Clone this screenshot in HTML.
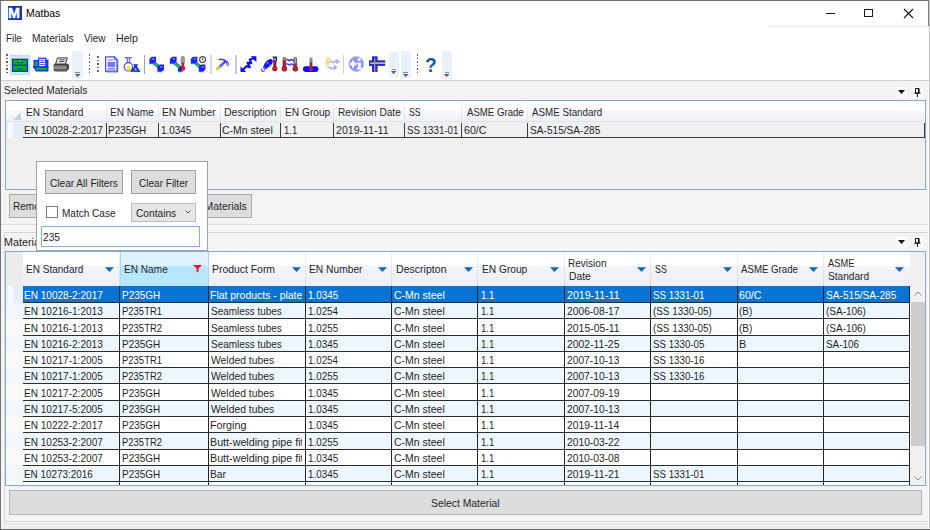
<!DOCTYPE html>
<html lang="en"><head><meta charset="utf-8"><title>Matbas</title>
<style>
html,body{margin:0;padding:0;background:#fff;}
body{width:930px;height:530px;position:relative;overflow:hidden;font-family:"Liberation Sans",sans-serif;}
#w{position:absolute;left:0;top:0;width:930px;height:530px;overflow:hidden;}
#w div,#w span,#w svg{position:absolute;}
.t{white-space:nowrap;line-height:1;transform-origin:0 0;display:block;}
</style></head><body><div id="w">
<div style="left:0px;top:0px;width:930px;height:530px;background:#ffffff;"></div>
<div style="left:8px;top:6px;width:13.5px;height:13.6px;background:#0b3aa8;"></div>
<span class="t" style="left:8.1px;top:4.5px;font-size:15.4px;line-height:16px;font-weight:bold;color:#fff;-webkit-text-stroke:0.45px #fff;transform:scaleX(0.93);">M</span>
<span class="t" style="left:25.643672692673643px;top:7.81px;font-size:10.5px;color:#000;transform:scaleX(0.9942);">Matbas</span>
<div style="left:825.5px;top:12.6px;width:9px;height:1px;background:#1a1a1a;"></div>
<div style="left:864px;top:8.5px;width:9px;height:8.5px;border:1px solid #1a1a1a;box-sizing:border-box;"></div>
<svg style="left:903px;top:7.5px" width="11" height="11" viewBox="0 0 11 11"><path d="M1 1 L10 10 M10 1 L1 10" stroke="#1a1a1a" stroke-width="1.15" fill="none"/></svg>
<div style="left:768px;top:26px;width:161px;height:1px;background:#ececec;"></div>
<span class="t" style="left:5.893465651264649px;top:33.06px;font-size:10.8px;color:#262626;transform:scaleX(0.9104);">File</span>
<span class="t" style="left:31.656492675718294px;top:33.06px;font-size:10.8px;color:#262626;transform:scaleX(0.9521);">Materials</span>
<span class="t" style="left:83.95600512932445px;top:33.06px;font-size:10.8px;color:#262626;transform:scaleX(0.9270);">View</span>
<span class="t" style="left:115.62989874082908px;top:33.06px;font-size:10.8px;color:#262626;transform:scaleX(0.9821);">Help</span>
<div style="left:6.2px;top:54.0px;width:1.6px;height:1.6px;background:#666666;"></div>
<div style="left:6.2px;top:57.52px;width:1.6px;height:1.6px;background:#666666;"></div>
<div style="left:6.2px;top:61.04px;width:1.6px;height:1.6px;background:#666666;"></div>
<div style="left:6.2px;top:64.56px;width:1.6px;height:1.6px;background:#666666;"></div>
<div style="left:6.2px;top:68.08px;width:1.6px;height:1.6px;background:#666666;"></div>
<div style="left:6.2px;top:71.60000000000001px;width:1.6px;height:1.6px;background:#666666;"></div>
<div style="left:88.9px;top:54.0px;width:1.6px;height:1.6px;background:#666666;"></div>
<div style="left:88.9px;top:57.52px;width:1.6px;height:1.6px;background:#666666;"></div>
<div style="left:88.9px;top:61.04px;width:1.6px;height:1.6px;background:#666666;"></div>
<div style="left:88.9px;top:64.56px;width:1.6px;height:1.6px;background:#666666;"></div>
<div style="left:88.9px;top:68.08px;width:1.6px;height:1.6px;background:#666666;"></div>
<div style="left:88.9px;top:71.60000000000001px;width:1.6px;height:1.6px;background:#666666;"></div>
<div style="left:97.4px;top:56.2px;width:1.6px;height:1.6px;background:#666666;"></div>
<div style="left:97.4px;top:59.720000000000006px;width:1.6px;height:1.6px;background:#666666;"></div>
<div style="left:97.4px;top:63.24000000000001px;width:1.6px;height:1.6px;background:#666666;"></div>
<div style="left:97.4px;top:66.76px;width:1.6px;height:1.6px;background:#666666;"></div>
<div style="left:97.4px;top:70.28px;width:1.6px;height:1.6px;background:#666666;"></div>
<div style="left:416.9px;top:54.0px;width:1.6px;height:1.6px;background:#666666;"></div>
<div style="left:416.9px;top:57.52px;width:1.6px;height:1.6px;background:#666666;"></div>
<div style="left:416.9px;top:61.04px;width:1.6px;height:1.6px;background:#666666;"></div>
<div style="left:416.9px;top:64.56px;width:1.6px;height:1.6px;background:#666666;"></div>
<div style="left:416.9px;top:68.08px;width:1.6px;height:1.6px;background:#666666;"></div>
<div style="left:416.9px;top:71.60000000000001px;width:1.6px;height:1.6px;background:#666666;"></div>
<div style="left:72.4px;top:51px;width:10.2px;height:28px;background:#eaf1fb;border-radius:0 2px 2px 0;"></div>
<div style="left:75.3px;top:72px;width:4.4px;height:1px;background:#8a8a8a;"></div>
<svg style="left:74.9px;top:74px" width="5.2" height="3" viewBox="0 0 5.2 3"><path d="M0 0 H5.2 L2.6 3 Z" fill="#5a5a5a"/></svg>
<div style="left:388.5px;top:52px;width:10.5px;height:24.5px;background:#eaf1fb;border-radius:0 2px 2px 0;"></div>
<div style="left:391.55px;top:69px;width:4.4px;height:1px;background:#8a8a8a;"></div>
<svg style="left:391.15px;top:71px" width="5.2" height="3" viewBox="0 0 5.2 3"><path d="M0 0 H5.2 L2.6 3 Z" fill="#5a5a5a"/></svg>
<div style="left:400.5px;top:51px;width:10.2px;height:28px;background:#eaf1fb;border-radius:0 2px 2px 0;"></div>
<div style="left:403.40000000000003px;top:72px;width:4.4px;height:1px;background:#8a8a8a;"></div>
<svg style="left:403.0px;top:74px" width="5.2" height="3" viewBox="0 0 5.2 3"><path d="M0 0 H5.2 L2.6 3 Z" fill="#5a5a5a"/></svg>
<div style="left:441.7px;top:51px;width:10.2px;height:28px;background:#eaf1fb;border-radius:0 2px 2px 0;"></div>
<div style="left:444.6px;top:72px;width:4.4px;height:1px;background:#8a8a8a;"></div>
<svg style="left:444.2px;top:74px" width="5.2" height="3" viewBox="0 0 5.2 3"><path d="M0 0 H5.2 L2.6 3 Z" fill="#5a5a5a"/></svg>
<div style="left:143.9px;top:55px;width:1.2px;height:18.5px;background:#9aa5b5;"></div>
<div style="left:210.4px;top:55px;width:1.4px;height:18.5px;background:#d3d8e1;"></div>
<div style="left:235.4px;top:55px;width:1.6px;height:18.5px;background:#c3cad6;"></div>
<div style="left:342.9px;top:55px;width:1.3px;height:18.5px;background:#cdd3dd;"></div>
<div style="left:10px;top:55px;width:19.5px;height:19.5px;background:#cfe9fa;border:1px dotted #a4d4f2;box-sizing:border-box;"></div>
<svg style="left:0;top:50px" width="460" height="30" viewBox="0 50 460 30">
<!-- cabinet -->
<rect x="12.5" y="59.3" width="15" height="12" fill="#00b400" stroke="#1a1aff" stroke-width="1.2"/>
<rect x="12.5" y="64.6" width="15" height="1.3" fill="#1432c8"/>
<rect x="17.4" y="61.7" width="5.2" height="1.2" fill="#1a3cd0"/>
<rect x="17.4" y="68.2" width="5.2" height="1.2" fill="#1a3cd0"/>
<rect x="18.8" y="60.9" width="2.4" height="0.8" fill="#7fd6c0"/>
<!-- tray with paper -->
<path d="M33.6 66.6 H47.8 V70.8 H36.2 Z" fill="#00b400" stroke="#1a1aff" stroke-width="1.2" stroke-linejoin="round"/>
<rect x="34" y="60.4" width="4.6" height="6.2" fill="#14967a" stroke="#1a1aff" stroke-width="1"/>
<rect x="45.2" y="60" width="2.8" height="7" fill="#0a6c8c" stroke="#1a1aff" stroke-width="0.8"/>
<rect x="38.8" y="58.2" width="7" height="8.5" fill="#ffffff" stroke="#1a1aff" stroke-width="1.1"/>
<path d="M40.2 60.3 H44.6 M40.2 62.4 H44.6 M40.2 64.5 H44.6" stroke="#4a4aff" stroke-width="1.1"/>
<!-- printer -->
<path d="M53.6 65 Q53.6 63.4 55.4 63.4 H66.6 Q69 63.4 69 65.6 V68.4 L66.4 71.5 H55.6 Q53.6 71.5 53.6 69.6 Z" fill="#454545"/>
<path d="M57.6 57.9 H67.4 L65.2 64 H55.6 Z" fill="#f0f0f0" stroke="#333333" stroke-width="1"/>
<path d="M59.4 59.8 H65 M58.8 61.6 H64.2" stroke="#4a4a4a" stroke-width="1"/>
<rect x="54.4" y="65.6" width="12" height="1" fill="#a8a8a8"/>
<rect x="54.2" y="67.4" width="12.4" height="1.1" fill="#d0d0d0"/>
<rect x="55" y="69.6" width="11" height="0.8" fill="#8a8a8a"/>
<!-- document -->
<path d="M106.6 72 H117.7 V59.8" fill="none" stroke="#5aa05a" stroke-width="1.2"/>
<path d="M105.6 56.8 H114.6 L117 59.4 V71.2 H105.6 Z" fill="#ffffff" stroke="#4646ff" stroke-width="1.2" stroke-linejoin="round"/>
<path d="M114.4 56.8 V59.6 H117" fill="none" stroke="#4646ff" stroke-width="0.9"/>
<rect x="107.6" y="59.4" width="5.8" height="1" fill="#7070ff"/>
<rect x="107.6" y="61.8" width="7.6" height="5.4" fill="#7878ff"/>
<rect x="107.6" y="68.4" width="7.6" height="1.1" fill="#4646ff"/>
<!-- flasks -->
<rect x="125" y="57.2" width="6.8" height="1.3" fill="#4c4cff"/>
<path d="M127.3 58.4 V62.6 M129.6 58.4 V62.6" stroke="#4c4cff" stroke-width="1"/>
<circle cx="128.4" cy="66.8" r="4.2" fill="#ffffff" stroke="#4444ff" stroke-width="1.2"/>
<path d="M126.8 65.8 H130.4 V70.6 H127.4 Z" fill="#f6ec18"/>
<rect x="133.4" y="64" width="4.6" height="1.1" fill="#5050ff"/>
<path d="M134.5 65 V66.8 L130.8 71.6 H140 L136.8 66.8 V65" fill="#1a28d8" stroke="#2a2aff" stroke-width="0.9" stroke-linejoin="round"/>
<path d="M135.6 67.6 L133.4 70.8 H138 Z" fill="#18a838"/>
<path d="M135.6 68 L134.8 69.6 H136.4 Z" fill="#e8f4e8"/>
<!-- pipe 1 -->
<g id="pipe">
<path d="M152.5 61.5 L160.5 68.6" stroke="#3a3aff" stroke-width="3.4"/>
<path d="M152.3 61.6 L160.7 69" stroke="#14c83c" stroke-width="2.1"/>
<path d="M149.4 59 L151.6 56.8 H156 V61.4 L153.8 63.6 H149.4 Z" fill="#1e1eff"/>
<path d="M149.4 63.6 H154 " stroke="#109848" stroke-width="1.2"/>
<rect x="152" y="58" width="2.4" height="1.8" fill="#6a7ae8"/>
<path d="M157.4 66.6 L159.6 64.4 H164 V69.4 L161.8 71.6 H157.4 Z" fill="#1e1eff"/>
<path d="M157.4 71.6 H162" stroke="#109848" stroke-width="1.2"/>
<rect x="160.2" y="66" width="2.2" height="1.8" fill="#6a7ae8"/>
</g>
<!-- pipe 2 + thermo -->
<g transform="translate(20.6 0)">
<path d="M152.5 61.5 L160.5 68.6" stroke="#3a3aff" stroke-width="3.4"/>
<path d="M152.3 61.6 L160.7 69" stroke="#14c83c" stroke-width="2.1"/>
<path d="M149.4 59 L151.6 56.8 H156 V61.4 L153.8 63.6 H149.4 Z" fill="#1e1eff"/>
<path d="M149.4 63.6 H154 " stroke="#109848" stroke-width="1.2"/>
<rect x="152" y="58" width="2.4" height="1.8" fill="#6a7ae8"/>
<path d="M157.4 68.6 L159.6 66.4 H162 V69.4 L161.8 71.6 H157.4 Z" fill="#1e1eff"/>
<path d="M157.4 71.6 H162" stroke="#109848" stroke-width="1.2"/>
</g>
<rect x="181.2" y="56.2" width="3.2" height="8" rx="1.6" fill="#9a9a9a" stroke="#6a6a6a" stroke-width="0.6"/>
<rect x="181.5" y="62.6" width="2.6" height="5" fill="#dc1432"/>
<circle cx="182.8" cy="68.4" r="2.4" fill="#dc1432"/>
<circle cx="180.8" cy="68.2" r="0.9" fill="#1a1a1a"/>
<!-- pipe 3 + clock -->
<g transform="translate(41.4 0)">
<path d="M152.5 61.5 L160.5 68.6" stroke="#3a3aff" stroke-width="3.4"/>
<path d="M152.3 61.6 L160.7 69" stroke="#14c83c" stroke-width="2.1"/>
<path d="M149.4 59 L151.6 56.8 H156 V61.4 L153.8 63.6 H149.4 Z" fill="#1e1eff"/>
<path d="M149.4 63.6 H154 " stroke="#109848" stroke-width="1.2"/>
<rect x="152" y="58" width="2.4" height="1.8" fill="#6a7ae8"/>
<path d="M157.4 66.6 L159.6 64.4 H164 V69.4 L161.8 71.6 H157.4 Z" fill="#1e1eff"/>
<path d="M157.4 71.6 H162" stroke="#109848" stroke-width="1.2"/>
<rect x="160.2" y="66" width="2.2" height="1.8" fill="#6a7ae8"/>
</g>
<circle cx="202.6" cy="59.6" r="3" fill="#ffffff" stroke="#4a4a4a" stroke-width="1.1"/>
<path d="M202.4 57.8 V59.9 H204" stroke="#444" stroke-width="0.8" fill="none"/>
<!-- hammer -->
<path d="M217.4 69 L224.6 62" stroke="#2a2aff" stroke-width="2.4" stroke-linecap="round"/>
<path d="M217 69.4 L219.4 67" stroke="#f0e018" stroke-width="2" stroke-linecap="round"/>
<path d="M219.4 67 L224.2 62.4" stroke="#58b89c" stroke-width="0.9"/>
<path d="M218.6 58.8 Q224 57.6 227.6 61.4 Q229.6 63.6 228.4 65.6 Q227 66.6 226.2 64.6 Q226.4 61.8 223.4 60.4 Q221 59.8 218.6 60.2 Z" fill="#3c3cff"/>
<circle cx="227.4" cy="64" r="0.9" fill="#c8d0ff"/>
<!-- zigzag arrows -->
<path d="M242.6 70.2 L246.4 66.2 L249.8 67.2 L247.6 62.8 L251.2 63.2 L249.8 59.6 L254.4 58.2" fill="none" stroke="#0a0aff" stroke-width="2.2" stroke-linejoin="round"/>
<path d="M250.6 56.3 H256.4 V62.1 Z" fill="#0a0aff"/>
<path d="M240.5 66.2 V71.9 H246.2 Z" fill="#0a0aff"/>
<!-- arrow + thermo -->
<ellipse cx="268.4" cy="63.6" rx="5.6" ry="3.1" transform="rotate(-45 268.4 63.6)" fill="#1414ff"/>
<path d="M272 56.4 H277 V61.4 Z" fill="#1414ff"/>
<path d="M261.2 68.6 L262.4 71.6 L265 70.8 M263.2 66 L264.4 69 L267 68.2" fill="none" stroke="#4646ff" stroke-width="1.1"/>
<circle cx="267.6" cy="62.8" r="0.9" fill="#a8b0ff"/>
<circle cx="270" cy="65.2" r="0.7" fill="#a8b0ff"/>
<rect x="273.7" y="58" width="2.3" height="9.4" rx="1.1" fill="#d01430" stroke="#2a1a1a" stroke-width="0.7"/>
<rect x="274" y="58.2" width="1.7" height="2" fill="#b0b0b0"/>
<circle cx="274.8" cy="68.8" r="2.3" fill="#dc1432" stroke="#2a1212" stroke-width="0.6"/>
<!-- two thermos -->
<path d="M286.4 60 q1 -1.2 2 0 t2 0 t2 0 t2 0 M286.4 64.4 q1 -1.2 2 0 t2 0 t2 0 t2 0" stroke="#2a2aff" stroke-width="1.3" fill="none"/>
<rect x="283" y="57.4" width="2.8" height="10" rx="1.3" fill="#c81830" stroke="#3a3030" stroke-width="0.7"/>
<rect x="283.2" y="57.6" width="2.4" height="3" rx="1" fill="#9a9a9a"/>
<circle cx="284.4" cy="68.8" r="2.5" fill="#dc1432" stroke="#3a1a1a" stroke-width="0.6"/>
<rect x="293.9" y="57.4" width="2.8" height="10" rx="1.3" fill="#a8a8a8" stroke="#3a3030" stroke-width="0.7"/>
<rect x="294.2" y="63.4" width="2.2" height="4" fill="#c81830"/>
<circle cx="295.3" cy="68.8" r="2.5" fill="#dc1432" stroke="#3a1a1a" stroke-width="0.6"/>
<!-- thermo on base -->
<rect x="303" y="66.2" width="15.4" height="5.8" rx="2.4" fill="#0c0cff"/>
<rect x="309.5" y="57.4" width="3" height="10" rx="1.4" fill="#8c8c8c"/>
<rect x="309.9" y="62.2" width="2.2" height="6" fill="#c41428"/>
<circle cx="311" cy="69" r="1.9" fill="#dc1432"/>
<!-- disabled lightning -->
<path d="M326.6 57.6 H330.8 L328.4 62.2 H330.6 L325.4 70.6 L326.8 64.6 H324.6 Z" fill="#f2de94"/>
<path d="M329.8 62 q1.2 -1.6 2.4 0 t2.4 0 t2.4 -0.6 M336.2 59.6 L338.8 61.6 L336 63.4 M328.4 68 q1.2 -1.6 2.4 0 t2.4 0 t2 -0.6 M334 65.4 L336.4 67.4 L334 69.4" stroke="#a8a8ff" stroke-width="1.4" fill="none"/>
<!-- globe -->
<circle cx="356.3" cy="64" r="7.5" fill="#9494ff" stroke="#a8cfc8" stroke-width="0.7"/>
<path d="M353 59.4 L354.5 62.6 L357.4 64 L354.5 65.4 L353 68.8 L351.5 65.4 L349 64 L351.5 62.6 Z" fill="#ffffff"/>
<circle cx="359.2" cy="59.6" r="1.5" fill="#ffffff"/>
<path d="M357 62.4 H360.8 V67.8 H362 V69.4 H356.8 V67.8 H358 V64 H357 Z" fill="#ffffff"/>
<!-- cross -->
<rect x="372" y="56.3" width="5.6" height="15.7" fill="#2a2ad8"/>
<rect x="369" y="60.3" width="16.2" height="5.6" fill="#2a2ad8"/>
<rect x="370" y="62.5" width="15.2" height="1.3" fill="#f4f018"/>
<rect x="374.2" y="58" width="1.1" height="14" fill="#b8b040"/>
</svg>
<span class="t" style="left:425.2px;top:54.9px;font-size:19.5px;line-height:20px;font-weight:bold;color:#0f5ea8;transform:scaleX(0.98);">?</span>

<div style="left:1px;top:80.3px;width:928px;height:444px;background:#f4f4f4;"></div>
<div style="left:1px;top:81px;width:928px;height:19px;background:#f3f3f3;"></div>
<div style="left:1px;top:80.3px;width:928px;height:1px;background:#d0d0d0;"></div>
<span class="t" style="left:4.040032325131351px;top:85.46px;font-size:10.8px;color:#262626;transform:scaleX(0.9379);">Selected Materials</span>
<div style="left:895.5px;top:87px;width:11px;height:10.5px;background:#fbfbfb;"></div>
<svg style="left:898px;top:90.2px" width="7" height="4" viewBox="0 0 7 4"><path d="M0 0 H7 L3.5 4 Z" fill="#111"/></svg>
<div style="left:912px;top:87px;width:10.8px;height:10.5px;background:#fbfbfb;"></div>
<svg style="left:914px;top:87.9px" width="7" height="9" viewBox="0 0 7 9"><path d="M1.5 0.5 H5 V5 H1.5 Z M0.3 5.2 H6.5 M3.4 5.2 V9" stroke="#111" stroke-width="1" fill="none"/><rect x="4" y="0.5" width="1.2" height="4.5" fill="#111"/></svg>
<div style="left:4.5px;top:100px;width:921.5px;height:89.6px;background:#f0f0f0;border:1px solid #84a8cf;box-sizing:border-box;"></div>
<div style="left:5.5px;top:101px;width:919.5px;height:9.5px;background:#ffffff;"></div>
<div style="left:5.5px;top:110.5px;width:919.5px;height:11px;background:linear-gradient(#f7f8fb,#eef0f6);"></div>
<div style="left:105.5px;top:101.5px;width:1px;height:20px;background:linear-gradient(#f4f4f4,#dcdfe6);"></div>
<div style="left:157.5px;top:101.5px;width:1px;height:20px;background:linear-gradient(#f4f4f4,#dcdfe6);"></div>
<div style="left:219.5px;top:101.5px;width:1px;height:20px;background:linear-gradient(#f4f4f4,#dcdfe6);"></div>
<div style="left:280.0px;top:101.5px;width:1px;height:20px;background:linear-gradient(#f4f4f4,#dcdfe6);"></div>
<div style="left:333.2px;top:101.5px;width:1px;height:20px;background:linear-gradient(#f4f4f4,#dcdfe6);"></div>
<div style="left:404.0px;top:101.5px;width:1px;height:20px;background:linear-gradient(#f4f4f4,#dcdfe6);"></div>
<div style="left:461.2px;top:101.5px;width:1px;height:20px;background:linear-gradient(#f4f4f4,#dcdfe6);"></div>
<div style="left:527.0px;top:101.5px;width:1px;height:20px;background:linear-gradient(#f4f4f4,#dcdfe6);"></div>
<div style="left:5.5px;top:121.2px;width:919.5px;height:0.8px;background:#e1e4ea;"></div>
<svg style="left:12.5px;top:111.5px" width="8" height="8" viewBox="0 0 8 8"><path d="M8 0 V8 H0 Z" fill="#cfcfcf"/></svg>
<span class="t" style="left:26.176643562276833px;top:107.06px;font-size:10.8px;color:#262626;transform:scaleX(0.9294);">EN Standard</span>
<span class="t" style="left:109.67152842562552px;top:107.06px;font-size:10.8px;color:#262626;transform:scaleX(0.9351);">EN Name</span>
<span class="t" style="left:161.95651080370413px;top:107.06px;font-size:10.8px;color:#262626;transform:scaleX(0.9521);">EN Number</span>
<span class="t" style="left:224.13831597494598px;top:107.06px;font-size:10.8px;color:#262626;transform:scaleX(0.9726);">Description</span>
<span class="t" style="left:284.96495711819836px;top:107.06px;font-size:10.8px;color:#262626;transform:scaleX(0.9426);">EN Group</span>
<span class="t" style="left:337.6727967667658px;top:107.06px;font-size:10.8px;color:#262626;transform:scaleX(0.9337);">Revision Date</span>
<span class="t" style="left:408.6090226154741px;top:107.06px;font-size:10.8px;color:#262626;transform:scaleX(0.7972);">SS</span>
<span class="t" style="left:466.68118699062023px;top:107.06px;font-size:10.8px;color:#262626;transform:scaleX(0.8919);">ASME Grade</span>
<span class="t" style="left:531.9808929455105px;top:107.06px;font-size:10.8px;color:#262626;transform:scaleX(0.9058);">ASME Standard</span>
<div style="left:5.5px;top:122px;width:17px;height:15.5px;background:#e3eefa;"></div>
<div style="left:7.5px;top:122px;width:5px;height:15.5px;background:#f6fafe;"></div>
<div style="left:22.5px;top:137px;width:902.5px;height:1px;background:#3a3a3a;"></div>
<div style="left:106px;top:122.5px;width:1px;height:15px;background:#3a3a3a;"></div>
<div style="left:158px;top:122.5px;width:1px;height:15px;background:#3a3a3a;"></div>
<div style="left:220px;top:122.5px;width:1px;height:15px;background:#3a3a3a;"></div>
<div style="left:280px;top:122.5px;width:1px;height:15px;background:#3a3a3a;"></div>
<div style="left:333px;top:122.5px;width:1px;height:15px;background:#3a3a3a;"></div>
<div style="left:404px;top:122.5px;width:1px;height:15px;background:#3a3a3a;"></div>
<div style="left:461px;top:122.5px;width:1px;height:15px;background:#3a3a3a;"></div>
<div style="left:527px;top:122.5px;width:1px;height:15px;background:#3a3a3a;"></div>
<div style="left:924px;top:122.5px;width:1px;height:15px;background:#3a3a3a;"></div>
<span class="t" style="left:24.175141214303633px;top:125.06px;font-size:10.8px;color:#262626;transform:scaleX(0.9311);">EN 10028-2:2017</span>
<span class="t" style="left:107.98459615435759px;top:125.06px;font-size:10.8px;color:#262626;transform:scaleX(0.9204);">P235GH</span>
<span class="t" style="left:160.94877452608364px;top:125.06px;font-size:10.8px;color:#262626;transform:scaleX(0.9132);">1.0345</span>
<span class="t" style="left:222.4670961918288px;top:125.06px;font-size:10.8px;color:#262626;transform:scaleX(0.9717);">C-Mn steel</span>
<span class="t" style="left:283.7775101889589px;top:125.06px;font-size:10.8px;color:#262626;transform:scaleX(0.8782);">1.1</span>
<span class="t" style="left:336.1679261104892px;top:125.06px;font-size:10.8px;color:#262626;transform:scaleX(0.9796);">2019-11-11</span>
<span class="t" style="left:406.5579531721201px;top:125.06px;font-size:10.8px;color:#262626;transform:scaleX(0.9013);">SS 1331-01</span>
<span class="t" style="left:464.460435126735px;top:125.06px;font-size:10.8px;color:#262626;transform:scaleX(0.9838);">60/C</span>
<span class="t" style="left:530.0400521466368px;top:125.06px;font-size:10.8px;color:#262626;transform:scaleX(0.9378);">SA-515/SA-285</span>
<div style="left:9px;top:194px;width:100px;height:23.5px;background:#dddddd;border:1px solid #a8a8a8;box-sizing:border-box;"></div>
<span class="t" style="left:13.176078125px;top:200.86px;font-size:10.8px;color:#262626;transform:scaleX(0.9300);">Remove Material</span>
<div style="left:113px;top:194px;width:139px;height:23.5px;background:#dddddd;border:1px solid #a8a8a8;box-sizing:border-box;"></div>
<span class="t" style="left:149.1038044610182px;top:201.46px;font-size:10.8px;color:#262626;transform:scaleX(0.9639);">Remove All Materials</span>
<div style="left:1px;top:224px;width:928px;height:1px;background:#dcdcdc;"></div>
<div style="left:1px;top:225px;width:928px;height:6.5px;background:#f6f6f6;"></div>
<div style="left:3.5px;top:231.5px;width:924px;height:1px;background:#d4d4d4;"></div>
<div style="left:3.5px;top:231.5px;width:1px;height:290px;background:#d9d9d9;"></div>
<span class="t" style="left:4.1148379930377175px;top:237.16px;font-size:10.8px;color:#262626;transform:scaleX(0.9991);">Materials</span>
<div style="left:895.5px;top:237px;width:11px;height:10.5px;background:#fbfbfb;"></div>
<svg style="left:898px;top:240.2px" width="7" height="4" viewBox="0 0 7 4"><path d="M0 0 H7 L3.5 4 Z" fill="#111"/></svg>
<div style="left:912px;top:237px;width:10.8px;height:10.5px;background:#fbfbfb;"></div>
<svg style="left:914px;top:237.9px" width="7" height="9" viewBox="0 0 7 9"><path d="M1.5 0.5 H5 V5 H1.5 Z M0.3 5.2 H6.5 M3.4 5.2 V9" stroke="#111" stroke-width="1" fill="none"/><rect x="4" y="0.5" width="1.2" height="4.5" fill="#111"/></svg>
<div style="left:4.5px;top:251px;width:921.5px;height:235px;background:#ffffff;border:1px solid #84a8cf;box-sizing:border-box;"></div>
<div style="left:5.5px;top:252px;width:904.2px;height:13.5px;background:#ffffff;"></div>
<div style="left:5.5px;top:265.5px;width:904.2px;height:20.80000000000001px;background:linear-gradient(#f4f5fa,#eceef5);"></div>
<div style="left:909.7px;top:252px;width:15.3px;height:35px;background:#f0f0f0;"></div>
<div style="left:5.5px;top:252px;width:17px;height:34.30000000000001px;background:#ececec;"></div>
<div style="left:119.2px;top:252px;width:1px;height:34.30000000000001px;background:linear-gradient(#f2f2f2,#d9dce4);"></div>
<div style="left:208.0px;top:252px;width:1px;height:34.30000000000001px;background:linear-gradient(#f2f2f2,#d9dce4);"></div>
<div style="left:304.8px;top:252px;width:1px;height:34.30000000000001px;background:linear-gradient(#f2f2f2,#d9dce4);"></div>
<div style="left:390.8px;top:252px;width:1px;height:34.30000000000001px;background:linear-gradient(#f2f2f2,#d9dce4);"></div>
<div style="left:477.0px;top:252px;width:1px;height:34.30000000000001px;background:linear-gradient(#f2f2f2,#d9dce4);"></div>
<div style="left:564.2px;top:252px;width:1px;height:34.30000000000001px;background:linear-gradient(#f2f2f2,#d9dce4);"></div>
<div style="left:650.3px;top:252px;width:1px;height:34.30000000000001px;background:linear-gradient(#f2f2f2,#d9dce4);"></div>
<div style="left:736.7px;top:252px;width:1px;height:34.30000000000001px;background:linear-gradient(#f2f2f2,#d9dce4);"></div>
<div style="left:823.2px;top:252px;width:1px;height:34.30000000000001px;background:linear-gradient(#f2f2f2,#d9dce4);"></div>
<div style="left:119.7px;top:252px;width:89px;height:13.5px;background:#def3fd;"></div>
<div style="left:119.7px;top:265.5px;width:89px;height:20.80000000000001px;background:#b8e6fc;"></div>
<div style="left:119.7px;top:252px;width:1px;height:34.30000000000001px;background:#a5d9f3;"></div>
<div style="left:207.7px;top:252px;width:1px;height:34.30000000000001px;background:#a5d9f3;"></div>
<span class="t" style="left:26.176643562276833px;top:264.36px;font-size:10.8px;color:#262626;transform:scaleX(0.9294);">EN Standard</span>
<span class="t" style="left:123.67152842562552px;top:264.36px;font-size:10.8px;color:#262626;transform:scaleX(0.9351);">EN Name</span>
<span class="t" style="left:212.1462878560026px;top:264.36px;font-size:10.8px;color:#262626;transform:scaleX(0.9636);">Product Form</span>
<span class="t" style="left:309.15971190122326px;top:264.36px;font-size:10.8px;color:#262626;transform:scaleX(0.9485);">EN Number</span>
<span class="t" style="left:395.6324033439148px;top:264.36px;font-size:10.8px;color:#262626;transform:scaleX(0.9793);">Descripton</span>
<span class="t" style="left:482.16495711819834px;top:264.36px;font-size:10.8px;color:#262626;transform:scaleX(0.9426);">EN Group</span>
<span class="t" style="left:654.5980606327304px;top:264.36px;font-size:10.8px;color:#262626;transform:scaleX(0.8196);">SS</span>
<span class="t" style="left:741.4811201593258px;top:264.36px;font-size:10.8px;color:#262626;transform:scaleX(0.8950);">ASME Grade</span>
<span class="t" style="left:568.1770419051957px;top:257.66px;font-size:10.8px;color:#262626;transform:scaleX(0.9289);">Revision</span>
<span class="t" style="left:568.6532008222115px;top:271.36px;font-size:10.8px;color:#262626;transform:scaleX(0.9558);">Date</span>
<span class="t" style="left:827.9817937370456px;top:257.86px;font-size:10.8px;color:#262626;transform:scaleX(0.8631);">ASME</span>
<span class="t" style="left:827.5400206743395px;top:271.36px;font-size:10.8px;color:#262626;transform:scaleX(0.9379);">Standard</span>
<svg style="left:105px;top:267.2px" width="9" height="5" viewBox="0 0 9 5"><path d="M0 0.3 H9 L4.5 5 Z" fill="#1668ae"/></svg>
<svg style="left:291.5px;top:267.2px" width="9" height="5" viewBox="0 0 9 5"><path d="M0 0.3 H9 L4.5 5 Z" fill="#1668ae"/></svg>
<svg style="left:377.5px;top:267.2px" width="9" height="5" viewBox="0 0 9 5"><path d="M0 0.3 H9 L4.5 5 Z" fill="#1668ae"/></svg>
<svg style="left:463.5px;top:267.2px" width="9" height="5" viewBox="0 0 9 5"><path d="M0 0.3 H9 L4.5 5 Z" fill="#1668ae"/></svg>
<svg style="left:550px;top:267.2px" width="9" height="5" viewBox="0 0 9 5"><path d="M0 0.3 H9 L4.5 5 Z" fill="#1668ae"/></svg>
<svg style="left:636.5px;top:267.2px" width="9" height="5" viewBox="0 0 9 5"><path d="M0 0.3 H9 L4.5 5 Z" fill="#1668ae"/></svg>
<svg style="left:722.5px;top:267.2px" width="9" height="5" viewBox="0 0 9 5"><path d="M0 0.3 H9 L4.5 5 Z" fill="#1668ae"/></svg>
<svg style="left:809px;top:267.2px" width="9" height="5" viewBox="0 0 9 5"><path d="M0 0.3 H9 L4.5 5 Z" fill="#1668ae"/></svg>
<svg style="left:895px;top:267.2px" width="9" height="5" viewBox="0 0 9 5"><path d="M0 0.3 H9 L4.5 5 Z" fill="#1668ae"/></svg>
<div style="left:192px;top:263px;width:12.5px;height:12.5px;background:#d0dcec;opacity:0.3;"></div>
<svg style="left:193.3px;top:264.5px" width="9" height="7.5" viewBox="0 0 9 7.5"><path d="M0 0 H9 L5.4 3.6 V7.5 H3.6 V3.6 Z" fill="#e8112d"/></svg>
<div style="left:22.5px;top:286.3px;width:887.2px;height:16.283px;background:#0a74d4;"></div>
<div style="left:5.5px;top:286.3px;width:17px;height:16.283px;background:#e3f0fb;"></div>
<div style="left:7.5px;top:286.3px;width:5px;height:16.283px;background:#f6fafe;"></div>
<span class="t" style="left:24.175141214303633px;top:289.96px;font-size:10.8px;color:#ffffff;transform:scaleX(0.9311);">EN 10028-2:2017</span>
<span class="t" style="left:121.68459615435759px;top:289.96px;font-size:10.8px;color:#ffffff;transform:scaleX(0.9204);">P235GH</span>
<span class="t" style="left:210.14306661973188px;top:289.96px;font-size:10.8px;color:#ffffff;transform:scaleX(0.9673);">Flat products - plate</span>
<span class="t" style="left:308.24877452608365px;top:289.96px;font-size:10.8px;color:#ffffff;transform:scaleX(0.9132);">1.0345</span>
<span class="t" style="left:393.96709619182883px;top:289.96px;font-size:10.8px;color:#ffffff;transform:scaleX(0.9717);">C-Mn steel</span>
<span class="t" style="left:480.7775101889589px;top:289.96px;font-size:10.8px;color:#ffffff;transform:scaleX(0.8782);">1.1</span>
<span class="t" style="left:566.9679261104892px;top:289.96px;font-size:10.8px;color:#ffffff;transform:scaleX(0.9796);">2019-11-11</span>
<span class="t" style="left:653.0579531721202px;top:289.96px;font-size:10.8px;color:#ffffff;transform:scaleX(0.9013);">SS 1331-01</span>
<span class="t" style="left:739.460435126735px;top:289.96px;font-size:10.8px;color:#ffffff;transform:scaleX(0.9838);">60/C</span>
<span class="t" style="left:826.0400521466368px;top:289.96px;font-size:10.8px;color:#ffffff;transform:scaleX(0.9378);">SA-515/SA-285</span>
<div style="left:22.5px;top:302.583px;width:887.2px;height:16.283px;background:#eef6fd;"></div>
<div style="left:5.5px;top:302.583px;width:17px;height:16.283px;background:#f1f7fd;"></div>
<span class="t" style="left:24.175820002126915px;top:306.24px;font-size:10.8px;color:#1f1f1f;transform:scaleX(0.9303);">EN 10216-1:2013</span>
<span class="t" style="left:121.72254875768101px;top:306.24px;font-size:10.8px;color:#1f1f1f;transform:scaleX(0.8775);">P235TR1</span>
<span class="t" style="left:210.5480535060218px;top:306.24px;font-size:10.8px;color:#1f1f1f;transform:scaleX(0.9215);">Seamless tubes</span>
<span class="t" style="left:308.2520039152403px;top:306.24px;font-size:10.8px;color:#1f1f1f;transform:scaleX(0.9092);">1.0254</span>
<span class="t" style="left:393.96709619182883px;top:306.24px;font-size:10.8px;color:#1f1f1f;transform:scaleX(0.9717);">C-Mn steel</span>
<span class="t" style="left:480.7775101889589px;top:306.24px;font-size:10.8px;color:#1f1f1f;transform:scaleX(0.8782);">1.1</span>
<span class="t" style="left:566.9835197575966px;top:306.24px;font-size:10.8px;color:#1f1f1f;transform:scaleX(0.9509);">2006-08-17</span>
<span class="t" style="left:652.8877645125591px;top:306.24px;font-size:10.8px;color:#1f1f1f;transform:scaleX(0.9142);">(SS 1330-05)</span>
<span class="t" style="left:739.3845507705231px;top:306.24px;font-size:10.8px;color:#1f1f1f;transform:scaleX(0.9190);">(B)</span>
<span class="t" style="left:825.8811134392408px;top:306.24px;font-size:10.8px;color:#1f1f1f;transform:scaleX(0.9241);">(SA-106)</span>
<div style="left:22.5px;top:318.866px;width:887.2px;height:16.283px;background:#ffffff;"></div>
<div style="left:5.5px;top:318.866px;width:17px;height:16.283px;background:#fafafa;"></div>
<span class="t" style="left:24.175820002126915px;top:322.52px;font-size:10.8px;color:#1f1f1f;transform:scaleX(0.9303);">EN 10216-1:2013</span>
<span class="t" style="left:121.72227047768132px;top:322.52px;font-size:10.8px;color:#1f1f1f;transform:scaleX(0.8779);">P235TR2</span>
<span class="t" style="left:210.5480535060218px;top:322.52px;font-size:10.8px;color:#1f1f1f;transform:scaleX(0.9215);">Seamless tubes</span>
<span class="t" style="left:308.24877452608365px;top:322.52px;font-size:10.8px;color:#1f1f1f;transform:scaleX(0.9132);">1.0255</span>
<span class="t" style="left:393.96709619182883px;top:322.52px;font-size:10.8px;color:#1f1f1f;transform:scaleX(0.9717);">C-Mn steel</span>
<span class="t" style="left:480.7775101889589px;top:322.52px;font-size:10.8px;color:#1f1f1f;transform:scaleX(0.8782);">1.1</span>
<span class="t" style="left:566.9759165655615px;top:322.52px;font-size:10.8px;color:#1f1f1f;transform:scaleX(0.9649);">2015-05-11</span>
<span class="t" style="left:652.8877645125591px;top:322.52px;font-size:10.8px;color:#1f1f1f;transform:scaleX(0.9142);">(SS 1330-05)</span>
<span class="t" style="left:739.3845507705231px;top:322.52px;font-size:10.8px;color:#1f1f1f;transform:scaleX(0.9190);">(B)</span>
<span class="t" style="left:825.8811134392408px;top:322.52px;font-size:10.8px;color:#1f1f1f;transform:scaleX(0.9241);">(SA-106)</span>
<div style="left:22.5px;top:335.149px;width:887.2px;height:16.283px;background:#eef6fd;"></div>
<div style="left:5.5px;top:335.149px;width:17px;height:16.283px;background:#f1f7fd;"></div>
<span class="t" style="left:24.175820002126915px;top:338.81px;font-size:10.8px;color:#1f1f1f;transform:scaleX(0.9303);">EN 10216-2:2013</span>
<span class="t" style="left:121.68459615435759px;top:338.81px;font-size:10.8px;color:#1f1f1f;transform:scaleX(0.9204);">P235GH</span>
<span class="t" style="left:210.5480535060218px;top:338.81px;font-size:10.8px;color:#1f1f1f;transform:scaleX(0.9215);">Seamless tubes</span>
<span class="t" style="left:308.24877452608365px;top:338.81px;font-size:10.8px;color:#1f1f1f;transform:scaleX(0.9132);">1.0345</span>
<span class="t" style="left:393.96709619182883px;top:338.81px;font-size:10.8px;color:#1f1f1f;transform:scaleX(0.9717);">C-Mn steel</span>
<span class="t" style="left:480.7775101889589px;top:338.81px;font-size:10.8px;color:#1f1f1f;transform:scaleX(0.8782);">1.1</span>
<span class="t" style="left:566.9766404748468px;top:338.81px;font-size:10.8px;color:#1f1f1f;transform:scaleX(0.9635);">2002-11-25</span>
<span class="t" style="left:653.0585348979738px;top:338.81px;font-size:10.8px;color:#1f1f1f;transform:scaleX(0.9002);">SS 1330-05</span>
<span class="t" style="left:739.1061206516953px;top:338.81px;font-size:10.8px;color:#1f1f1f;transform:scaleX(1.0090);">B</span>
<span class="t" style="left:826.0495731278089px;top:338.81px;font-size:10.8px;color:#1f1f1f;transform:scaleX(0.9184);">SA-106</span>
<div style="left:22.5px;top:351.432px;width:887.2px;height:16.283px;background:#ffffff;"></div>
<div style="left:5.5px;top:351.432px;width:17px;height:16.283px;background:#fafafa;"></div>
<span class="t" style="left:24.176028635219904px;top:355.09px;font-size:10.8px;color:#1f1f1f;transform:scaleX(0.9301);">EN 10217-1:2005</span>
<span class="t" style="left:121.72254875768101px;top:355.09px;font-size:10.8px;color:#1f1f1f;transform:scaleX(0.8775);">P235TR1</span>
<span class="t" style="left:210.9544312615091px;top:355.09px;font-size:10.8px;color:#1f1f1f;transform:scaleX(0.9601);">Welded tubes</span>
<span class="t" style="left:308.2520039152403px;top:355.09px;font-size:10.8px;color:#1f1f1f;transform:scaleX(0.9092);">1.0254</span>
<span class="t" style="left:393.96709619182883px;top:355.09px;font-size:10.8px;color:#1f1f1f;transform:scaleX(0.9717);">C-Mn steel</span>
<span class="t" style="left:480.7775101889589px;top:355.09px;font-size:10.8px;color:#1f1f1f;transform:scaleX(0.8782);">1.1</span>
<span class="t" style="left:566.984172673064px;top:355.09px;font-size:10.8px;color:#1f1f1f;transform:scaleX(0.9497);">2007-10-13</span>
<span class="t" style="left:653.0583688468786px;top:355.09px;font-size:10.8px;color:#1f1f1f;transform:scaleX(0.9005);">SS 1330-16</span>
<div style="left:22.5px;top:367.71500000000003px;width:887.2px;height:16.283px;background:#eef6fd;"></div>
<div style="left:5.5px;top:367.71500000000003px;width:17px;height:16.283px;background:#f1f7fd;"></div>
<span class="t" style="left:24.176028635219904px;top:371.37px;font-size:10.8px;color:#1f1f1f;transform:scaleX(0.9301);">EN 10217-1:2005</span>
<span class="t" style="left:121.72227047768132px;top:371.37px;font-size:10.8px;color:#1f1f1f;transform:scaleX(0.8779);">P235TR2</span>
<span class="t" style="left:210.9544312615091px;top:371.37px;font-size:10.8px;color:#1f1f1f;transform:scaleX(0.9601);">Welded tubes</span>
<span class="t" style="left:308.24877452608365px;top:371.37px;font-size:10.8px;color:#1f1f1f;transform:scaleX(0.9132);">1.0255</span>
<span class="t" style="left:393.96709619182883px;top:371.37px;font-size:10.8px;color:#1f1f1f;transform:scaleX(0.9717);">C-Mn steel</span>
<span class="t" style="left:480.7775101889589px;top:371.37px;font-size:10.8px;color:#1f1f1f;transform:scaleX(0.8782);">1.1</span>
<span class="t" style="left:566.984172673064px;top:371.37px;font-size:10.8px;color:#1f1f1f;transform:scaleX(0.9497);">2007-10-13</span>
<span class="t" style="left:653.0583688468786px;top:371.37px;font-size:10.8px;color:#1f1f1f;transform:scaleX(0.9005);">SS 1330-16</span>
<div style="left:22.5px;top:383.99800000000005px;width:887.2px;height:16.283px;background:#ffffff;"></div>
<div style="left:5.5px;top:383.99800000000005px;width:17px;height:16.283px;background:#fafafa;"></div>
<span class="t" style="left:24.176028635219904px;top:387.66px;font-size:10.8px;color:#1f1f1f;transform:scaleX(0.9301);">EN 10217-2:2005</span>
<span class="t" style="left:121.68459615435759px;top:387.66px;font-size:10.8px;color:#1f1f1f;transform:scaleX(0.9204);">P235GH</span>
<span class="t" style="left:210.9544312615091px;top:387.66px;font-size:10.8px;color:#1f1f1f;transform:scaleX(0.9601);">Welded tubes</span>
<span class="t" style="left:308.24877452608365px;top:387.66px;font-size:10.8px;color:#1f1f1f;transform:scaleX(0.9132);">1.0345</span>
<span class="t" style="left:393.96709619182883px;top:387.66px;font-size:10.8px;color:#1f1f1f;transform:scaleX(0.9717);">C-Mn steel</span>
<span class="t" style="left:480.7775101889589px;top:387.66px;font-size:10.8px;color:#1f1f1f;transform:scaleX(0.8782);">1.1</span>
<span class="t" style="left:566.9838213084636px;top:387.66px;font-size:10.8px;color:#1f1f1f;transform:scaleX(0.9503);">2007-09-19</span>
<div style="left:22.5px;top:400.281px;width:887.2px;height:16.283px;background:#eef6fd;"></div>
<div style="left:5.5px;top:400.281px;width:17px;height:16.283px;background:#f1f7fd;"></div>
<span class="t" style="left:24.176028635219904px;top:403.94px;font-size:10.8px;color:#1f1f1f;transform:scaleX(0.9301);">EN 10217-5:2005</span>
<span class="t" style="left:121.68459615435759px;top:403.94px;font-size:10.8px;color:#1f1f1f;transform:scaleX(0.9204);">P235GH</span>
<span class="t" style="left:210.9544312615091px;top:403.94px;font-size:10.8px;color:#1f1f1f;transform:scaleX(0.9601);">Welded tubes</span>
<span class="t" style="left:308.24877452608365px;top:403.94px;font-size:10.8px;color:#1f1f1f;transform:scaleX(0.9132);">1.0345</span>
<span class="t" style="left:393.96709619182883px;top:403.94px;font-size:10.8px;color:#1f1f1f;transform:scaleX(0.9717);">C-Mn steel</span>
<span class="t" style="left:480.7775101889589px;top:403.94px;font-size:10.8px;color:#1f1f1f;transform:scaleX(0.8782);">1.1</span>
<span class="t" style="left:566.984172673064px;top:403.94px;font-size:10.8px;color:#1f1f1f;transform:scaleX(0.9497);">2007-10-13</span>
<div style="left:22.5px;top:416.564px;width:887.2px;height:16.283px;background:#ffffff;"></div>
<div style="left:5.5px;top:416.564px;width:17px;height:16.283px;background:#fafafa;"></div>
<span class="t" style="left:24.175141214303633px;top:420.22px;font-size:10.8px;color:#1f1f1f;transform:scaleX(0.9311);">EN 10222-2:2017</span>
<span class="t" style="left:121.68459615435759px;top:420.22px;font-size:10.8px;color:#1f1f1f;transform:scaleX(0.9204);">P235GH</span>
<span class="t" style="left:210.12009054350182px;top:420.22px;font-size:10.8px;color:#1f1f1f;transform:scaleX(0.9932);">Forging</span>
<span class="t" style="left:308.24877452608365px;top:420.22px;font-size:10.8px;color:#1f1f1f;transform:scaleX(0.9132);">1.0345</span>
<span class="t" style="left:393.96709619182883px;top:420.22px;font-size:10.8px;color:#1f1f1f;transform:scaleX(0.9717);">C-Mn steel</span>
<span class="t" style="left:480.7775101889589px;top:420.22px;font-size:10.8px;color:#1f1f1f;transform:scaleX(0.8782);">1.1</span>
<span class="t" style="left:566.9779795856509px;top:420.22px;font-size:10.8px;color:#1f1f1f;transform:scaleX(0.9611);">2019-11-14</span>
<div style="left:22.5px;top:432.84700000000004px;width:887.2px;height:16.283px;background:#eef6fd;"></div>
<div style="left:5.5px;top:432.84700000000004px;width:17px;height:16.283px;background:#f1f7fd;"></div>
<span class="t" style="left:24.175141214303633px;top:436.50px;font-size:10.8px;color:#1f1f1f;transform:scaleX(0.9311);">EN 10253-2:2007</span>
<span class="t" style="left:121.72227047768132px;top:436.50px;font-size:10.8px;color:#1f1f1f;transform:scaleX(0.8779);">P235TR2</span>
<div style="left:210.12px;top:432.84700000000004px;width:91.68px;height:16.283px;overflow:hidden;"><span class="t" style="left:0;top:3.66px;font-size:10.8px;color:#262626;transform:scaleX(0.9929);">Butt-welding pipe fittings</span></div>
<span class="t" style="left:308.24877452608365px;top:436.50px;font-size:10.8px;color:#1f1f1f;transform:scaleX(0.9132);">1.0255</span>
<span class="t" style="left:393.96709619182883px;top:436.50px;font-size:10.8px;color:#1f1f1f;transform:scaleX(0.9717);">C-Mn steel</span>
<span class="t" style="left:480.7775101889589px;top:436.50px;font-size:10.8px;color:#1f1f1f;transform:scaleX(0.8782);">1.1</span>
<span class="t" style="left:566.9835197575966px;top:436.50px;font-size:10.8px;color:#1f1f1f;transform:scaleX(0.9509);">2010-03-22</span>
<div style="left:22.5px;top:449.13px;width:887.2px;height:16.283px;background:#ffffff;"></div>
<div style="left:5.5px;top:449.13px;width:17px;height:16.283px;background:#fafafa;"></div>
<span class="t" style="left:24.175141214303633px;top:452.79px;font-size:10.8px;color:#1f1f1f;transform:scaleX(0.9311);">EN 10253-2:2007</span>
<span class="t" style="left:121.68459615435759px;top:452.79px;font-size:10.8px;color:#1f1f1f;transform:scaleX(0.9204);">P235GH</span>
<div style="left:210.12px;top:449.13px;width:91.68px;height:16.283px;overflow:hidden;"><span class="t" style="left:0;top:3.66px;font-size:10.8px;color:#262626;transform:scaleX(0.9929);">Butt-welding pipe fittings</span></div>
<span class="t" style="left:308.24877452608365px;top:452.79px;font-size:10.8px;color:#1f1f1f;transform:scaleX(0.9132);">1.0345</span>
<span class="t" style="left:393.96709619182883px;top:452.79px;font-size:10.8px;color:#1f1f1f;transform:scaleX(0.9717);">C-Mn steel</span>
<span class="t" style="left:480.7775101889589px;top:452.79px;font-size:10.8px;color:#1f1f1f;transform:scaleX(0.8782);">1.1</span>
<span class="t" style="left:566.9842228289617px;top:452.79px;font-size:10.8px;color:#1f1f1f;transform:scaleX(0.9496);">2010-03-08</span>
<div style="left:22.5px;top:465.413px;width:887.2px;height:16.283px;background:#eef6fd;"></div>
<div style="left:5.5px;top:465.413px;width:17px;height:16.283px;background:#f1f7fd;"></div>
<span class="t" style="left:24.188632265819525px;top:469.07px;font-size:10.8px;color:#1f1f1f;transform:scaleX(0.9158);">EN 10273:2016</span>
<span class="t" style="left:121.68459615435759px;top:469.07px;font-size:10.8px;color:#1f1f1f;transform:scaleX(0.9204);">P235GH</span>
<span class="t" style="left:210.15583545491089px;top:469.07px;font-size:10.8px;color:#1f1f1f;transform:scaleX(0.9528);">Bar</span>
<span class="t" style="left:308.24877452608365px;top:469.07px;font-size:10.8px;color:#1f1f1f;transform:scaleX(0.9132);">1.0345</span>
<span class="t" style="left:393.96709619182883px;top:469.07px;font-size:10.8px;color:#1f1f1f;transform:scaleX(0.9717);">C-Mn steel</span>
<span class="t" style="left:480.7775101889589px;top:469.07px;font-size:10.8px;color:#1f1f1f;transform:scaleX(0.8782);">1.1</span>
<span class="t" style="left:566.9759165655615px;top:469.07px;font-size:10.8px;color:#1f1f1f;transform:scaleX(0.9649);">2019-11-21</span>
<span class="t" style="left:653.0579531721202px;top:469.07px;font-size:10.8px;color:#1f1f1f;transform:scaleX(0.9013);">SS 1331-01</span>
<div style="left:22.5px;top:302px;width:887.2px;height:1px;background:#2e2e2e;"></div>
<div style="left:22.5px;top:301.75px;width:887.2px;height:1.5px;background:rgba(40,40,40,0.18);"></div>
<div style="left:22.5px;top:318px;width:887.2px;height:1px;background:#2e2e2e;"></div>
<div style="left:22.5px;top:317.75px;width:887.2px;height:1.5px;background:rgba(40,40,40,0.18);"></div>
<div style="left:22.5px;top:335px;width:887.2px;height:1px;background:#2e2e2e;"></div>
<div style="left:22.5px;top:334.75px;width:887.2px;height:1.5px;background:rgba(40,40,40,0.18);"></div>
<div style="left:22.5px;top:351px;width:887.2px;height:1px;background:#2e2e2e;"></div>
<div style="left:22.5px;top:350.75px;width:887.2px;height:1.5px;background:rgba(40,40,40,0.18);"></div>
<div style="left:22.5px;top:367px;width:887.2px;height:1px;background:#2e2e2e;"></div>
<div style="left:22.5px;top:366.75px;width:887.2px;height:1.5px;background:rgba(40,40,40,0.18);"></div>
<div style="left:22.5px;top:383px;width:887.2px;height:1px;background:#2e2e2e;"></div>
<div style="left:22.5px;top:382.75px;width:887.2px;height:1.5px;background:rgba(40,40,40,0.18);"></div>
<div style="left:22.5px;top:400px;width:887.2px;height:1px;background:#2e2e2e;"></div>
<div style="left:22.5px;top:399.75px;width:887.2px;height:1.5px;background:rgba(40,40,40,0.18);"></div>
<div style="left:22.5px;top:416px;width:887.2px;height:1px;background:#2e2e2e;"></div>
<div style="left:22.5px;top:415.75px;width:887.2px;height:1.5px;background:rgba(40,40,40,0.18);"></div>
<div style="left:22.5px;top:432px;width:887.2px;height:1px;background:#2e2e2e;"></div>
<div style="left:22.5px;top:431.75px;width:887.2px;height:1.5px;background:rgba(40,40,40,0.18);"></div>
<div style="left:22.5px;top:449px;width:887.2px;height:1px;background:#2e2e2e;"></div>
<div style="left:22.5px;top:448.75px;width:887.2px;height:1.5px;background:rgba(40,40,40,0.18);"></div>
<div style="left:22.5px;top:465px;width:887.2px;height:1px;background:#2e2e2e;"></div>
<div style="left:22.5px;top:464.75px;width:887.2px;height:1.5px;background:rgba(40,40,40,0.18);"></div>
<div style="left:22.5px;top:481px;width:887.2px;height:1px;background:#2e2e2e;"></div>
<div style="left:22.5px;top:480.75px;width:887.2px;height:1.5px;background:rgba(40,40,40,0.18);"></div>
<div style="left:119px;top:286.3px;width:1px;height:198.7px;background:#262626;"></div>
<div style="left:208px;top:286.3px;width:1px;height:198.7px;background:#262626;"></div>
<div style="left:305px;top:286.3px;width:1px;height:198.7px;background:#262626;"></div>
<div style="left:391px;top:286.3px;width:1px;height:198.7px;background:#262626;"></div>
<div style="left:477px;top:286.3px;width:1px;height:198.7px;background:#262626;"></div>
<div style="left:564px;top:286.3px;width:1px;height:198.7px;background:#262626;"></div>
<div style="left:650px;top:286.3px;width:1px;height:198.7px;background:#262626;"></div>
<div style="left:737px;top:286.3px;width:1px;height:198.7px;background:#262626;"></div>
<div style="left:823px;top:286.3px;width:1px;height:198.7px;background:#262626;"></div>
<div style="left:909px;top:286.3px;width:1px;height:198.7px;background:#262626;"></div>
<div style="left:910.4px;top:286.3px;width:14.6px;height:198.7px;background:#f0f0f0;"></div>
<div style="left:911px;top:301.5px;width:14px;height:144px;background:#cdcdcd;"></div>
<svg style="left:913.5px;top:291px" width="8" height="5" viewBox="0 0 8 5"><path d="M0.5 4.5 L4 1 L7.5 4.5" stroke="#8a8a8a" stroke-width="1" fill="none"/></svg>
<svg style="left:913.5px;top:475.5px" width="8" height="5" viewBox="0 0 8 5"><path d="M0.5 0.5 L4 4 L7.5 0.5" stroke="#8a8a8a" stroke-width="1" fill="none"/></svg>
<div style="left:9px;top:490.3px;width:912.7px;height:24.3px;background:#dddddd;border:1px solid #b4b4b4;box-sizing:border-box;"></div>
<span class="t" style="left:430.8292532578721px;top:498.06px;font-size:10.8px;color:#262626;transform:scaleX(0.9599);">Select Material</span>
<div style="left:3.5px;top:520.7px;width:924.5px;height:1px;background:#d9d9d9;"></div>
<div style="left:1px;top:523.3px;width:928px;height:0.8px;background:#e2e2e2;"></div>
<div style="left:1px;top:524px;width:928px;height:5px;background:#f1efee;"></div>
<div style="left:35.5px;top:160.5px;width:172.5px;height:90.5px;background:#ffffff;border:1px solid #a3a3a3;box-sizing:border-box;"></div>
<div style="left:45.3px;top:170.3px;width:77.7px;height:23.4px;background:#dddddd;border:1px solid #a0a0a0;box-sizing:border-box;"></div>
<span class="t" style="left:49.98736661820878px;top:177.66px;font-size:10.8px;color:#262626;transform:scaleX(0.9347);">Clear All Filters</span>
<div style="left:131.2px;top:170.3px;width:64.8px;height:23.4px;background:#dddddd;border:1px solid #a0a0a0;box-sizing:border-box;"></div>
<span class="t" style="left:138.79034060993885px;top:177.66px;font-size:10.8px;color:#262626;transform:scaleX(0.9293);">Clear Filter</span>
<div style="left:45.8px;top:206.3px;width:12.2px;height:11.8px;background:#ffffff;border:1px solid #7c7c7c;box-sizing:border-box;"></div>
<span class="t" style="left:61.876393393449696px;top:207.66px;font-size:10.8px;color:#262626;transform:scaleX(0.9296);">Match Case</span>
<div style="left:131.2px;top:203px;width:64.8px;height:18.5px;background:#e6e6e6;border:1px solid #bdbdbd;box-sizing:border-box;"></div>
<span class="t" style="left:136.18297323280876px;top:207.66px;font-size:10.8px;color:#262626;transform:scaleX(0.9427);">Contains</span>
<svg style="left:184.5px;top:209.5px" width="6" height="4" viewBox="0 0 6 4"><path d="M0.5 0.5 L3 3 L5.5 0.5" stroke="#555" stroke-width="1" fill="none"/></svg>
<div style="left:41px;top:226.3px;width:159px;height:20.5px;background:#ffffff;border:1px solid #7eb4ea;box-sizing:border-box;"></div>
<span class="t" style="left:42.98948614054px;top:231.66px;font-size:10.8px;color:#262626;transform:scaleX(0.9399);">235</span>
<div style="left:0px;top:0px;width:930px;height:1px;background:#6f6f6f;"></div>
<div style="left:0px;top:0px;width:1px;height:530px;background:#747474;"></div>
<div style="left:0px;top:528.6px;width:930px;height:1.4px;background:#666666;"></div>
<div style="left:928px;top:0px;width:1px;height:26px;background:#808080;"></div>
<div style="left:929px;top:0px;width:1px;height:528px;background:#c4c4c4;"></div>
<div style="left:928px;top:81px;width:1px;height:447px;background:#fafafa;"></div>
</div></body></html>
